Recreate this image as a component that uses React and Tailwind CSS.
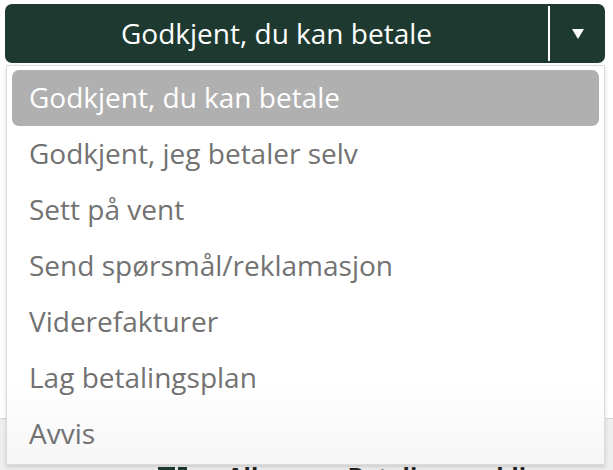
const options = [
  "Godkjent, du kan betale",
  "Godkjent, jeg betaler selv",
  "Sett på vent",
  "Send spørsmål/reklamasjon",
  "Viderefakturer",
  "Lag betalingsplan",
  "Avvis",
];

export default function App() {
  return (
    <div className="relative w-[613px] h-[470px] overflow-hidden bg-white font-['Open_Sans',sans-serif]">
      {/* page behind the menu */}
      <div className="absolute left-0 right-0 top-[418px] bottom-0 bg-[#eeeeee] border-t border-[#d6d6d6]">
        <div className="flex items-start pl-[158px] pt-[45px]">
          <span className="mt-[3px] w-[17px] h-[10px] bg-[#1e3a30]" />
          <span className="mt-[3px] ml-[3px] w-[9px] h-[10px] bg-[#1e3a30]" />
          <span className="ml-[40px] text-[24px] font-bold leading-none text-[#222]">Alle</span>
          <span className="ml-[75px] text-[24px] font-bold leading-none text-[#222]">Betalingsmeldinger</span>
        </div>
      </div>

      <div className="relative pt-[4px] pl-[5px] w-[605px]">
        {/* Select button */}
        <div className="flex h-[59px] rounded-[7px] bg-[#1e3a30] text-white">
          <div className="flex-1 flex items-center justify-center text-[28px] pb-[2px]">
            Godkjent, du kan betale
          </div>
          <div className="my-[2px] w-[2px] bg-white" />
          <div className="w-[55px] flex items-center justify-center">
            <svg width="14" height="12" viewBox="0 0 14 12">
              <path d="M1 1h12L7 11z" fill="white" />
            </svg>
          </div>
        </div>

        {/* Menu */}
        <ul className="mt-[2px] ml-[1px] h-[400px] border border-[#dcdcdc] bg-gradient-to-b from-white from-80% to-[#f6f6f6] shadow-[0_2px_4px_rgba(0,0,0,0.15)] px-[5px] pt-[4px]">
          {options.map((o, i) => (
            <li
              key={o}
              className={
                i === 0
                  ? "h-[56px] flex items-center rounded-[7px] bg-[#b0b0b0] text-white text-[28px] pl-[17px] pb-[2px]"
                  : "h-[56px] flex items-center text-[#727272] text-[28px] pl-[17px] pb-[2px]"
              }
            >
              {o}
            </li>
          ))}
        </ul>
      </div>
    </div>
  );
}
